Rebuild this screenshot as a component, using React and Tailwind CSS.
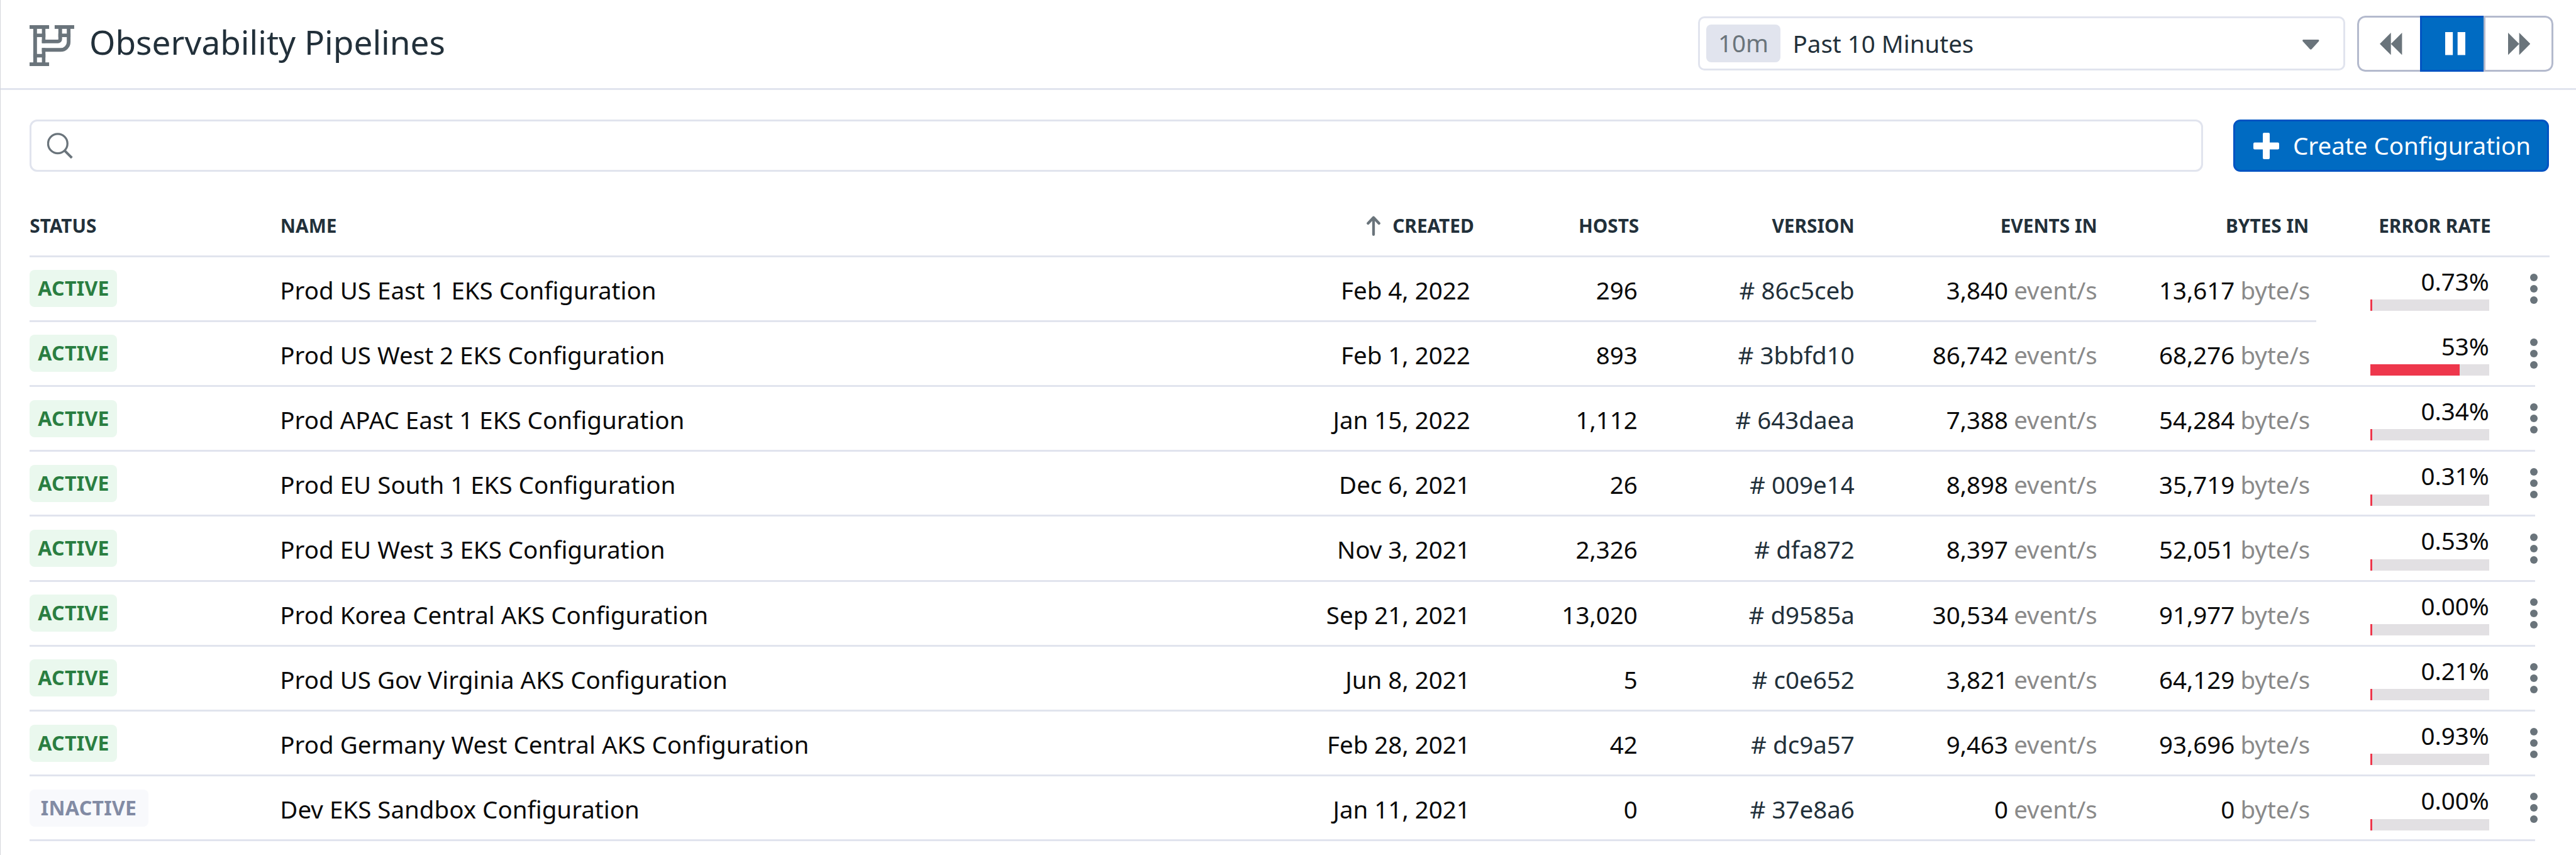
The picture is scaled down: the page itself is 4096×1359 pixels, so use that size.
import React from "react";

const ROWS = [
  { status: "ACTIVE", name: "Prod US East 1 EKS Configuration", created: "Feb 4, 2022", hosts: "296", version: "86c5ceb", events: "3,840", bytes: "13,617", error: "0.73%", bar: 3 },
  { status: "ACTIVE", name: "Prod US West 2 EKS Configuration", created: "Feb 1, 2022", hosts: "893", version: "3bbfd10", events: "86,742", bytes: "68,276", error: "53%", bar: 141.5 },
  { status: "ACTIVE", name: "Prod APAC East 1 EKS Configuration", created: "Jan 15, 2022", hosts: "1,112", version: "643daea", events: "7,388", bytes: "54,284", error: "0.34%", bar: 3 },
  { status: "ACTIVE", name: "Prod EU South 1 EKS Configuration", created: "Dec 6, 2021", hosts: "26", version: "009e14", events: "8,898", bytes: "35,719", error: "0.31%", bar: 3 },
  { status: "ACTIVE", name: "Prod EU West 3 EKS Configuration", created: "Nov 3, 2021", hosts: "2,326", version: "dfa872", events: "8,397", bytes: "52,051", error: "0.53%", bar: 3 },
  { status: "ACTIVE", name: "Prod Korea Central AKS Configuration", created: "Sep 21, 2021", hosts: "13,020", version: "d9585a", events: "30,534", bytes: "91,977", error: "0.00%", bar: 3 },
  { status: "ACTIVE", name: "Prod US Gov Virginia AKS Configuration", created: "Jun 8, 2021", hosts: "5", version: "c0e652", events: "3,821", bytes: "64,129", error: "0.21%", bar: 3 },
  { status: "ACTIVE", name: "Prod Germany West Central AKS Configuration", created: "Feb 28, 2021", hosts: "42", version: "dc9a57", events: "9,463", bytes: "93,696", error: "0.93%", bar: 3 },
  { status: "INACTIVE", name: "Dev EKS Sandbox Configuration", created: "Jan 11, 2021", hosts: "0", version: "37e8a6", events: "0", bytes: "0", error: "0.00%", bar: 3 },
];

const GRID =
  "grid w-[3636px] shrink-0 grid-cols-[397.5px_1155px_738px_266px_345px_386px_338.5px]";

function PipeIcon() {
  return (
    <svg className="h-[65.4px] w-[71px]" viewBox="0 0 217 200" fill="none">
      <g fill="#6a747b">
        <rect x="0" y="0" width="95" height="18" />
        <rect x="122" y="0" width="95" height="18" />
        <rect x="0" y="181" width="95" height="18" />
        <rect x="18" y="10" width="18" height="180" />
        <rect x="60" y="10" width="17" height="77" />
        <rect x="60" y="111" width="17" height="75" />
        <rect x="18" y="41" width="59" height="17" />
        <rect x="18" y="140" width="59" height="17" />
        <rect x="140" y="41" width="59" height="17" />
      </g>
      <g stroke="#6a747b" strokeWidth="18">
        <path d="M149 10V68a11 11 0 0 1-11 11H60" />
        <path d="M190 10V82a38 38 0 0 1-38 38H60" />
      </g>
    </svg>
  );
}

function Header() {
  return (
    <header className="flex h-[143.25px] items-start border-b-3 border-[#e1e4ee] pl-[46px] pr-[36px]">
      <div className="mt-[39.6px]">
        <PipeIcon />
      </div>
      <h1 className="ml-[24px] mt-[26.6px] text-[53.1px] leading-[80px] text-[#22303a]">
        Observability Pipelines
      </h1>
      <div className="ml-auto mt-[26px] flex h-[86px] w-[1029px] items-center rounded-[10px] border-3 border-[#e1e4ee] pl-[10px] pr-[38px] text-[38.5px]">
        <span className="flex h-[60px] w-[118px] items-center justify-center rounded-[8px] bg-[#e1e4ee] text-[#6a747b]">
          10m
        </span>
        <span className="ml-[19.5px] mt-px text-[#22303a]">Past 10 Minutes</span>
        <svg className="ml-auto mt-[4px] h-[16px] w-[26.6px]" viewBox="0 0 81 48">
          <path d="M4 0H77Q83 2 79 8L45 45Q40.5 50 36 45L2 8Q-2 2 4 0Z" fill="#6a747b" />
        </svg>
      </div>
      <div className="ml-[19px] mt-[25px] flex h-[89px] w-[312px] overflow-hidden rounded-[13px]">
        <button className="flex w-[100px] items-center rounded-l-[13px] border-3 border-r-0 border-[#b4bacd] pl-[33.4px]">
          <svg className="h-[35.4px] w-[35.4px]" viewBox="0 0 108 108" fill="#6a747b">
            <path d="M54 0V108L0 54ZM108 0V108L54 54Z" />
          </svg>
        </button>
        <button className="flex w-[100.5px] items-center border-3 border-r-0 border-[#0053c2] bg-[#006bc2] pl-[37px]">
          <svg className="h-[36.6px] w-[32.2px]" viewBox="0 0 98 111" fill="#ffffff">
            <path d="M0 0H37V111H0ZM60 0H98V111H60Z" />
          </svg>
        </button>
        <button className="flex flex-1 items-center rounded-r-[13px] border-3 border-[#b4bacd] pl-[36px]">
          <svg className="h-[35.4px] w-[35.4px]" viewBox="0 0 108 108" fill="#6a747b">
            <path d="M0 0L54 54L0 108ZM54 0L108 54L54 108Z" />
          </svg>
        </button>
      </div>
    </header>
  );
}

function Toolbar() {
  return (
    <div className="mt-[46.75px] flex h-[83px] justify-between pl-[46.3px] pr-[43px]">
      <div className="flex w-[3456px] items-center rounded-[12px] border-3 border-[#e1e4ee] pl-[25px]">
        <svg className="h-[41.3px] w-[40.6px]" viewBox="0 0 124 126" fill="none" stroke="#6a747b">
          <circle cx="51.5" cy="52.5" r="47" strokeWidth="10" />
          <path d="M84 86L120 122" strokeWidth="12" />
        </svg>
      </div>
      <button className="flex w-[502.5px] items-center rounded-[11px] border-3 border-[#0053c2] bg-[#006bc2] pl-[29px] text-[38.5px] text-white">
        <svg className="h-[42px] w-[41px]" viewBox="0 0 41 42" fill="#ffffff">
          <rect x="15" y="0" width="11" height="42" rx="2" />
          <rect x="0" y="15.5" width="41" height="11" rx="2" />
        </svg>
        <span className="ml-[22.5px]">Create Configuration</span>
      </button>
    </div>
  );
}

function TableHead() {
  return (
    <div className="flex h-[135.5px] w-[4007px] border-b-3 border-[#e1e4ee] pt-[60px] text-[29.8px] font-bold leading-[52px] text-[#22303a]">
      <div className={GRID}>
        <div>STATUS</div>
        <div className="pl-[1px]">NAME</div>
        <div className="-mr-[6px] flex items-start justify-end">
          <svg className="mr-[19px] mt-[9.5px] h-[32px] w-[22px]" viewBox="0 0 22 32" fill="none" stroke="#6a747b" strokeWidth="4.3" strokeLinecap="round" strokeLinejoin="round">
            <path d="M11 29.8V3M2.3 12L11 2.8L19.7 12" />
          </svg>
          CREATED
        </div>
        <div className="-mr-[2.5px] text-right">HOSTS</div>
        <div className="text-right">VERSION</div>
        <div className="text-right">EVENTS IN</div>
        <div className="pr-[2px] text-right">BYTES IN</div>
      </div>
      <div className="w-[277.5px] text-right">ERROR RATE</div>
    </div>
  );
}

function Row({ row, first }) {
  const active = row.status === "ACTIVE";
  return (
    <div className="flex h-[103.21px] w-[3984px] text-[38.5px] leading-[105.5px] text-[#0a0a0a]">
      <div className={GRID + " border-b-3 border-[#e1e4ee]"}>
        <div>
          <span
            className={
              "mt-[20.7px] block h-[59px] rounded-[8px] text-[32px] font-bold leading-[58px] tracking-[0.3px] " +
              (active
                ? "w-[138.5px] bg-[#eaf8ee] pl-[13px] text-[#2a7e41]"
                : "w-[188.5px] bg-[#f8f9fc] pl-[17.5px] text-[#828ba4]")
            }
          >
            {row.status}
          </span>
        </div>
        <div className="whitespace-nowrap pl-[0.5px]">{row.name}</div>
        <div className="text-right">{row.created}</div>
        <div className="text-right">{row.hosts}</div>
        <div className="text-right text-[#22303a]"># {row.version}</div>
        <div className="flex justify-end">
          {row.events}
          <span className="ml-[9px] text-[#8a8a8a]">event/s</span>
        </div>
        <div className="flex justify-end">
          {row.bytes}
          <span className="ml-[9px] text-[#8a8a8a]">byte/s</span>
        </div>
      </div>
      <div className={"flex w-[348px] shrink-0 " + (first ? "" : "border-b-3 border-[#e1e4ee]")}>
        <div className="ml-[86px] w-[188.5px] shrink-0 pt-[12px]">
          <div className="text-right leading-[53px]">{row.error}</div>
          <div className="mt-[2.5px] h-[18px] bg-[#e2e0e3]">
            <div className="h-full bg-[#ee374c]" style={{ width: row.bar }} />
          </div>
        </div>
        <svg className="ml-[65px] mt-[26.3px] h-[48px] w-[12px] shrink-0" viewBox="0 0 12 48" fill="#6a747b">
          <circle cx="6" cy="6" r="6" />
          <circle cx="6" cy="24" r="6" />
          <circle cx="6" cy="42" r="6" />
        </svg>
      </div>
    </div>
  );
}

export default function App() {
  return (
    <div className="h-[1359px] w-[4096px] overflow-hidden border-l border-[#d5d7dc] bg-white font-['Noto_Sans',sans-serif]">
      <Header />
      <Toolbar />
      <div className="pl-[46.3px]">
        <TableHead />
        {ROWS.map((row, i) => (
          <Row key={row.name} row={row} first={i === 0} />
        ))}
      </div>
    </div>
  );
}
